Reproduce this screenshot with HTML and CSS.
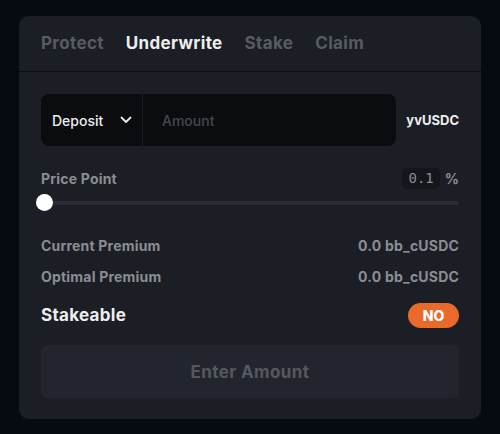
FILE: index.html
```html
<!DOCTYPE html>
<html>
<head>
<meta charset="utf-8">
<link rel="stylesheet" href="styles.css">
</head>
<body>
<div class="card">
  <div class="tabs">
    <span class="tab">Protect</span>
    <span class="tab active">Underwrite</span>
    <span class="tab">Stake</span>
    <span class="tab">Claim</span>
  </div>
  <div class="body">
    <div class="input-row">
      <div class="input">
        <div class="select">
          <span>Deposit</span>
          <svg width="12" height="8" viewBox="0 0 12 8"><path d="M1.5 1.5 L6 6 L10.5 1.5" fill="none" stroke="#e6e6e6" stroke-width="1.8" stroke-linecap="round" stroke-linejoin="round"/></svg>
        </div>
        <div class="amount">Amount</div>
      </div>
      <div class="token">yvUSDC</div>
    </div>
    <div class="row price">
      <span class="label">Price Point</span>
      <span class="pp"><span class="ppval">0.1</span><span class="pct">%</span></span>
    </div>
    <div class="slider"><div class="thumb"></div></div>
    <div class="row info first">
      <span class="label">Current Premium</span>
      <span class="label">0.0 bb_cUSDC</span>
    </div>
    <div class="row info">
      <span class="label">Optimal Premium</span>
      <span class="label">0.0 bb_cUSDC</span>
    </div>
    <div class="row stake">
      <span class="stakelabel">Stakeable</span>
      <span class="pill">NO</span>
    </div>
    <div class="button">Enter Amount</div>
  </div>
</div>
</body>
</html>
```
FILE: styles.css
```css
* { box-sizing: border-box; }
html, body { margin: 0; padding: 0; }
body {
  background: #060b12;
  font-family: Inter, "Noto Sans", sans-serif;
  width: 500px;
  height: 434px;
  padding: 16px 19px 0 19px;
}
.card {
  background: #1b1e25;
  border-radius: 10px;
  height: 403px;
}
.tabs {
  display: flex;
  gap: 22px;
  padding: 0 22px;
  height: 56px;
  align-items: center;
  border-bottom: 1px solid #0b0d11;
  padding-bottom: 1px;
}
.tab {
  font-size: 17px;
  font-weight: 700;
  color: #585b62;
  letter-spacing: 0.35px;
}
.tab.active { color: #eeeeee; }
.body {
  padding: 22px 22px 0 22px;
}
.input-row {
  display: flex;
  align-items: center;
}
.input {
  width: 355px;
  height: 52px;
  background: #0a0c0f;
  border-radius: 8px;
  display: flex;
}
.select {
  width: 102px;
  border-right: 1px solid #1b1e24;
  display: flex;
  align-items: center;
  justify-content: space-between;
  padding: 0 10px 0 11px;
  font-size: 14px;
  color: #ececec;
  font-weight: 500;
}
.amount {
  display: flex;
  align-items: center;
  padding-left: 19px;
  font-size: 14px;
  color: #45484d;
  font-weight: 500;
}
.token {
  margin-left: auto;
  font-size: 13px;
  font-weight: 700;
  color: #eeeeee;
}
.row {
  display: flex;
  justify-content: space-between;
  align-items: center;
}
.label {
  font-size: 14px;
  font-weight: 700;
  color: #8b8d92;
  letter-spacing: 0.2px;
}
.price { margin-top: 21px; height: 22px; }
.pp { display: flex; align-items: center; gap: 5px; }
.ppval {
  font-family: "DejaVu Sans Mono", "Liberation Mono", monospace;
  font-size: 14px;
  color: #8b8d92;
  background: #14161b;
  border-radius: 5px;
  padding: 3px 6px;
  line-height: 15px;
}
.pct { font-size: 14px; font-weight: 700; color: #8b8d92; }
.slider {
  position: relative;
  margin-top: 12px;
  height: 4px;
  background: #2a2d35;
  border-radius: 2px;
}
.thumb {
  position: absolute;
  left: -5px;
  top: -7px;
  width: 17px;
  height: 17px;
  border-radius: 50%;
  background: #ffffff;
}
.info { height: 20px; }
.info.first { margin-top: 30px; }
.info + .info { margin-top: 11px; }
.stake { margin-top: 16px; height: 26px; }
.stakelabel { font-size: 17px; font-weight: 700; color: #eeeeee; letter-spacing: 0.3px; }
.pill {
  background: #ea6a2b;
  color: #ffffff;
  font-weight: 800;
  font-size: 14px;
  border-radius: 13px;
  width: 51px;
  height: 25px;
  display: flex;
  align-items: center;
  justify-content: center;
}
.button {
  margin-top: 17px;
  height: 53px;
  background: #22252d;
  border-radius: 6px;
  display: flex;
  align-items: center;
  justify-content: center;
  font-size: 17px;
  font-weight: 700;
  color: #55585e;
  letter-spacing: 0.4px;
}
```
